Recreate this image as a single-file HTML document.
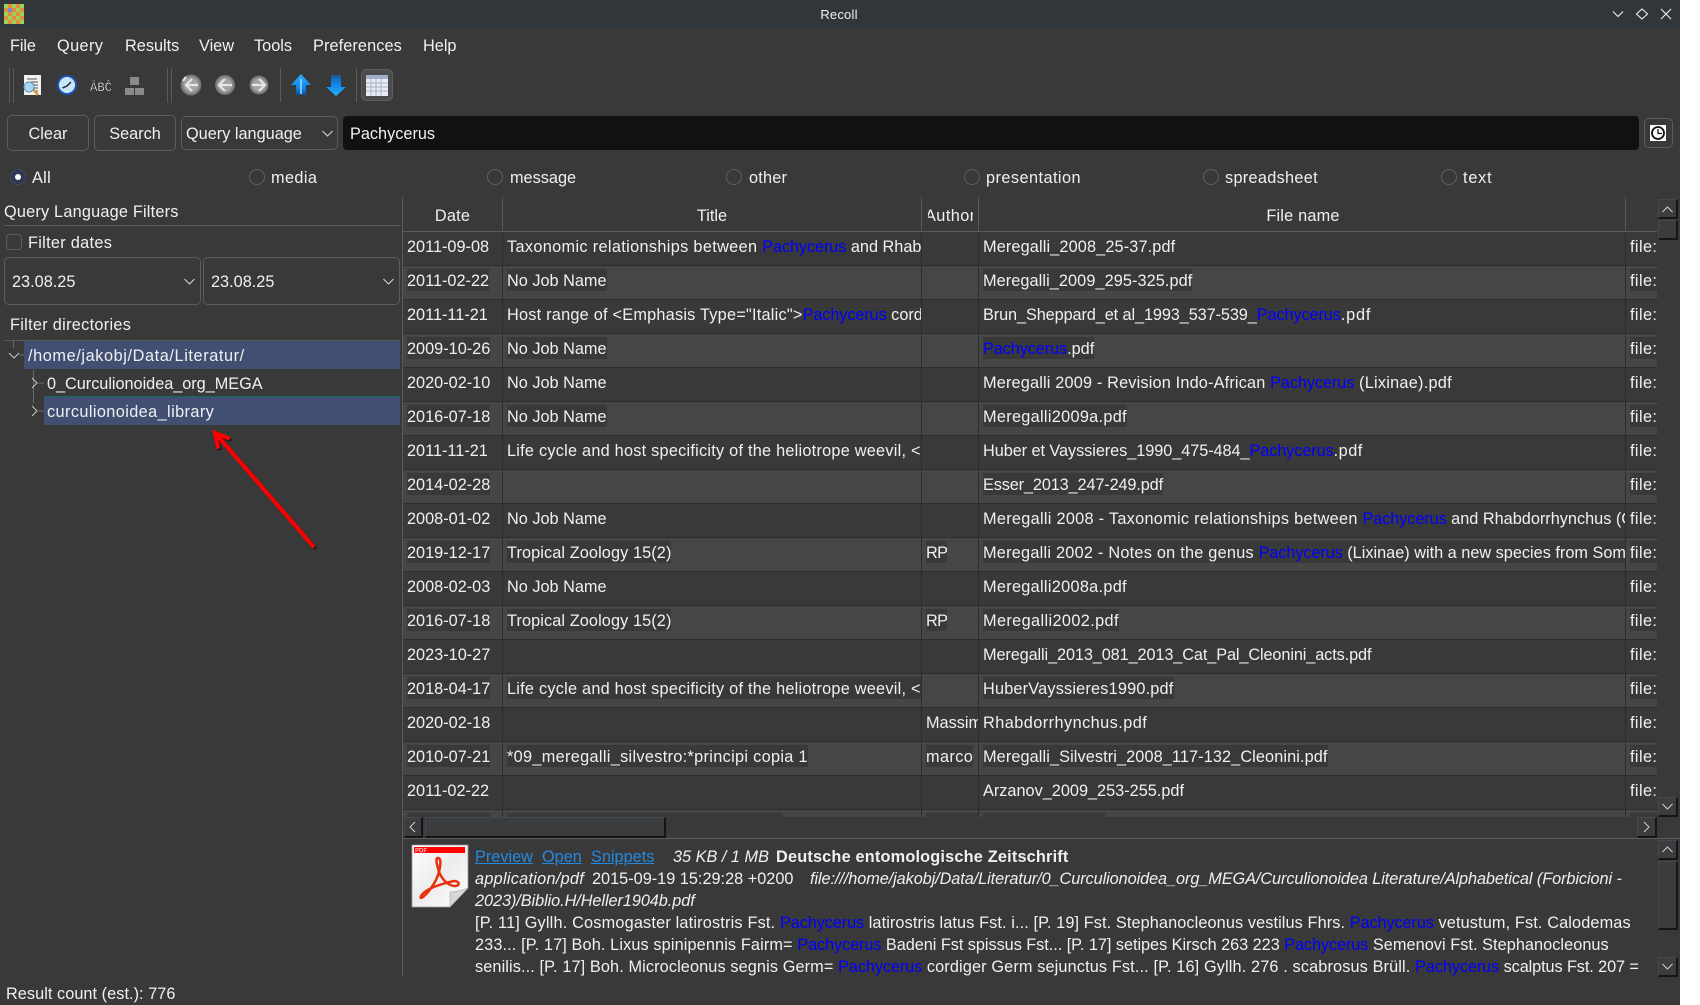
<!DOCTYPE html>
<html><head><meta charset="utf-8"><title>Recoll</title>
<style>
html,body{margin:0;padding:0;background:#fff}
#w{position:relative;width:1680px;height:1005px;background:#393939;overflow:hidden;font-family:"Liberation Sans",sans-serif;font-size:16.3px;color:#eff0f1;line-height:22px}
#page{position:relative;width:1700px;height:1005px;background:#fff;overflow:hidden}
.a{position:absolute;white-space:nowrap;transform:translateY(1px)}
.l{position:absolute}
.b{position:absolute;box-sizing:border-box;border:1px solid #5c5c5c;border-radius:5px;text-align:center}
.rb{position:absolute;width:16px;height:16px;box-sizing:border-box;border:1px solid #5e5e5e;border-radius:50%;top:169px}
.r{position:absolute;left:403px;width:1254px;height:34px;box-sizing:border-box;border-top:1px solid #2b2e31}
.r.p{background:#464646}
.c{position:absolute;top:3px;height:22px;overflow:hidden;white-space:nowrap}
.c span.x{display:inline-block;height:22px;line-height:24px;vertical-align:top}
.r.p .c span.x{background:#393939}
.d{left:4px;width:95px}
.ti{left:104px;width:414px}
.au{left:523px;width:52px}
.f{left:580px;width:642px}
.u{left:1227px;width:27px;letter-spacing:.4px}
i.h{font-style:normal;color:#0000ff;letter-spacing:-.1px}
.sb{position:absolute;box-sizing:border-box;border-style:solid;border-width:1px 2px 2px 1px;border-color:#43494e #141516 #141516 #43494e;background:#3a3c3e}
a{color:#2489e0;text-decoration:underline;position:absolute;white-space:nowrap;transform:translateY(1px)}
.pl{position:absolute;left:475px;white-space:nowrap;transform:translateY(1px)}
svg{position:absolute;overflow:visible}
</style></head><body><div id="page"><div id="w">

<!-- title bar -->
<div class="l" style="left:0;top:0;width:1680px;height:28px;background:#31363b"></div>
<svg style="left:4px;top:4px" width="20" height="20" viewBox="0 0 5 5" shape-rendering="crispEdges">
<rect width="5" height="5" fill="#97d35c"/>
<rect x="1" y="0" width="1" height="1" fill="#e88a3c"/><rect x="3" y="0" width="1" height="1" fill="#e88a3c"/>
<rect x="0" y="1" width="1" height="1" fill="#e88a3c"/><rect x="1" y="1" width="1" height="1" fill="#6f8fd8"/><rect x="2" y="1" width="1" height="1" fill="#e88a3c"/><rect x="4" y="1" width="1" height="1" fill="#e88a3c"/>
<rect x="1" y="2" width="1" height="1" fill="#e88a3c"/><rect x="3" y="2" width="1" height="1" fill="#e88a3c"/>
<rect x="0" y="3" width="1" height="1" fill="#e88a3c"/><rect x="2" y="3" width="1" height="1" fill="#e88a3c"/><rect x="4" y="3" width="1" height="1" fill="#e88a3c"/>
<rect x="1" y="4" width="1" height="1" fill="#e88a3c"/><rect x="3" y="4" width="1" height="1" fill="#e88a3c"/>
</svg>
<div class="a" style="left:739px;width:200px;text-align:center;top:3px;font-size:13px;letter-spacing:.2px">Recoll</div>
<svg style="left:1612px;top:8px" width="64" height="12" fill="none" stroke="#eff0f1" stroke-width="1.1">
<path d="M1 3.5L6 8.5L11 3.5"/><path d="M30 1L35.5 6L30 11L24.500 6Z"/><path d="M49 1L59 11M59 1L49 11"/>
</svg>

<!-- menu -->
<div class="a" style="left:10px;top:34px;letter-spacing:-.1px">File</div>
<div class="a" style="left:57px;top:34px;letter-spacing:.4px">Query</div>
<div class="a" style="left:125px;top:34px">Results</div>
<div class="a" style="left:199px;top:34px">View</div>
<div class="a" style="left:254px;top:34px">Tools</div>
<div class="a" style="left:313px;top:34px;letter-spacing:.1px">Preferences</div>
<div class="a" style="left:423px;top:34px">Help</div>

<!-- toolbar -->
<svg style="left:0;top:62px" width="400" height="46">
<g fill="#5a5a5a">
<rect x="9" y="6" width="1" height="35"/><rect x="13" y="6" width="1" height="35"/>
<rect x="167" y="6" width="1" height="35"/><rect x="171" y="6" width="1" height="35"/>
<rect x="280" y="6" width="1" height="34"/><rect x="356" y="6" width="1" height="34"/>
</g>
<!-- doc search -->
<rect x="24" y="13" width="17" height="20" fill="#f2f2f0"/>
<path d="M27 17h10M31 20h7M29 23h9M33 26h5M33 29h5" stroke="#555" stroke-width="1"/>
<path d="M33 27l5 6" stroke="#d89a40" stroke-width="2.500"/>
<circle cx="29" cy="25" r="5" fill="#a8d8f4" stroke="#6a90b0"/>
<!-- clock -->
<circle cx="67" cy="23" r="10" fill="#1f4fb8"/><circle cx="67" cy="23" r="8" fill="#c6e6fa"/>
<path d="M67 24L71 20M67 24L62.500 26" stroke="#222" stroke-width="1.500"/>
<path d="M67 15.500v1.500M67 29v1.500M59.500 23h1.500M73 23h1.500" stroke="#fff"/>
<!-- ABC -->
<text x="90" y="29" font-family="Liberation Mono,monospace" font-size="13" fill="#fff" stroke="#000" stroke-width=".3" textLength="22" lengthAdjust="spacingAndGlyphs">ÂBĈ</text>
<!-- blocks -->
<rect x="130" y="15" width="9" height="8" fill="#8a8a8a"/><rect x="125" y="26" width="9" height="7" fill="#8a8a8a"/><rect x="135" y="26" width="9" height="7" fill="#8a8a8a"/>
<!-- nav -->
<defs><radialGradient id="g" cx=".5" cy=".5" r=".5"><stop offset=".6" stop-color="#a4a4a4"/><stop offset="1" stop-color="#6a6a6a"/></radialGradient>
<linearGradient id="bu" x1="0" y1="0" x2="0" y2="1"><stop offset="0" stop-color="#2fb0ff"/><stop offset=".7" stop-color="#0d82e6"/><stop offset="1" stop-color="#0a4f90"/></linearGradient>
<linearGradient id="bd" x1="0" y1="1" x2="0" y2="0"><stop offset="0" stop-color="#2fb0ff"/><stop offset=".6" stop-color="#0d82e6"/><stop offset="1" stop-color="#1a5a90"/></linearGradient></defs>
<circle cx="191" cy="23" r="10.500" fill="url(#g)"/><path d="M198 23H186M192 17L186 23L192 29M186 15L183 19" stroke="#e6e6e6" stroke-width="2.200" fill="none"/>
<circle cx="225" cy="23" r="10" fill="url(#g)"/><path d="M232 23H219M225 17L219 23L225 29" stroke="#e6e6e6" stroke-width="2.200" fill="none"/>
<circle cx="259" cy="23" r="9.500" fill="url(#g)"/><path d="M252 23H265M259 17L265 23L259 29" stroke="#e6e6e6" stroke-width="2.200" fill="none"/>
<path d="M301 12L311 23H306V33H296V23H291Z" fill="url(#bu)"/><path d="M301 17V32" stroke="#a5dcff" stroke-width="1.500"/>
<path d="M331 13H341V25H346L336 34L326 25H331Z" fill="url(#bd)"/>
<rect x="361.500" y="7.500" width="31" height="31" rx="5" fill="#4b4b4b" stroke="#5f5f5f"/>
<rect x="366" y="13" width="22" height="21" fill="#e8edf5"/><rect x="366" y="13" width="22" height="4" fill="#9fb0c8"/>
<path d="M366 21h22M366 25h22M366 29h22M371 17v17M376 17v17M381 17v17" stroke="#a9b4c4" stroke-width="1"/>
</svg>

<!-- query row -->
<div class="b" style="left:7px;top:115px;width:82px;height:36px;line-height:36px">Clear</div>
<div class="b" style="left:94px;top:115px;width:82px;height:36px;line-height:36px">Search</div>
<div class="b" style="left:181px;top:116px;width:157px;height:34px;line-height:34px;text-align:left;padding-left:4px">Query language</div>
<svg style="left:322px;top:130px" width="11" height="7" fill="none" stroke="#d8d8d8"><path d="M.5 1L5.500 6L10.500 1"/></svg>
<div class="l" style="left:343px;top:116px;width:1296px;height:34px;background:#111;border-radius:4px"></div>
<div class="a" style="left:350px;top:122px">Pachycerus</div>
<div class="b" style="left:1644px;top:118px;width:29px;height:30px"></div>
<svg style="left:1650px;top:125px" width="16" height="16"><rect width="16" height="16" fill="#fff"/><circle cx="8" cy="8" r="6" fill="none" stroke="#111" stroke-width="1.800"/><path d="M8 4V8.500H12" fill="none" stroke="#111" stroke-width="1.300"/></svg>

<!-- radios -->
<div class="rb" style="left:10px;background:#2f3a50;border-color:#3d4a66"></div><div class="l" style="left:15px;top:174px;width:6px;height:6px;border-radius:50%;background:#fff"></div>
<div class="a" style="left:32px;top:166px;letter-spacing:.3px">All</div>
<div class="rb" style="left:249px"></div><div class="a" style="left:271px;top:166px;letter-spacing:.4px">media</div>
<div class="rb" style="left:487px"></div><div class="a" style="left:510px;top:166px">message</div>
<div class="rb" style="left:726px"></div><div class="a" style="left:749px;top:166px;letter-spacing:.2px">other</div>
<div class="rb" style="left:964px"></div><div class="a" style="left:986px;top:166px;letter-spacing:.45px">presentation</div>
<div class="rb" style="left:1203px"></div><div class="a" style="left:1225px;top:166px;letter-spacing:.3px">spreadsheet</div>
<div class="rb" style="left:1441px"></div><div class="a" style="left:1463px;top:166px;letter-spacing:.8px">text</div>

<!-- left panel -->
<div class="a" style="left:4px;top:200px;letter-spacing:.2px">Query Language Filters</div>
<div class="l" style="left:4px;top:225px;width:396px;height:1px;background:#5a5a5a"></div>
<div class="l" style="left:6px;top:234px;width:16px;height:16px;box-sizing:border-box;border:1px solid #5e5e5e;border-radius:4px"></div>
<div class="a" style="left:28px;top:231px;letter-spacing:.3px">Filter dates</div>
<div class="b" style="left:4px;top:257px;width:197px;height:48px;line-height:48px;text-align:left;padding-left:7px">23.08.25</div>
<div class="b" style="left:203px;top:257px;width:197px;height:48px;line-height:48px;text-align:left;padding-left:7px">23.08.25</div>
<svg style="left:184px;top:278px" width="205" height="7" fill="none" stroke="#d8d8d8"><path d="M.5 1L5.500 6L10.500 1M199.500 1L204.500 6L209.500 1"/></svg>
<div class="a" style="left:10px;top:313px;letter-spacing:.3px">Filter directories</div>
<div class="l" style="left:4px;top:340px;width:396px;height:1px;background:#5a5a5a"></div>
<div class="l" style="left:24px;top:341px;width:376px;height:28px;background:#434f72"></div>
<div class="l" style="left:44px;top:396px;width:356px;height:29px;background:#434f72;border-top:1px solid #14695c;box-sizing:border-box"></div>
<svg style="left:0;top:340px" width="50" height="85" fill="none" stroke="#6a6a6a">
<path d="M13.500 1V8M19 15H24M33.500 30V63M38 43H44M38 71H44"/>
<path d="M9 13L14 18L19 13M32 38L37 43L32 48M32 66L37 71L32 76" stroke="#c8c8c8"/>
</svg>
<div class="a" style="left:28px;top:344px;letter-spacing:.6px">/home/jakobj/Data/Literatur/</div>
<div class="a" style="left:47px;top:372px;letter-spacing:-.03px">0_Curculionoidea_org_MEGA</div>
<div class="a" style="left:47px;top:400px;letter-spacing:.4px">curculionoidea_library</div>

<!-- arrow -->
<svg style="left:0;top:0" width="400" height="600" fill="none" stroke-linecap="round">
<g stroke="#1a1a1a" stroke-width="4" transform="translate(1.500 1.500)"><path d="M313 546L216 434M228 438L215 433L218 447"/></g>
<g stroke="#f00" stroke-width="4"><path d="M313 546L216 434M228 438L215 433L218 447"/></g>
</svg>

<div class="a" style="left:6px;top:982px;letter-spacing:.05px">Result count (est.): 776</div>

<!-- table -->
<div class="l" style="left:402px;top:197px;width:1px;height:780px;background:#5a5a5a"></div>
<div class="a" style="left:403px;width:99px;text-align:center;top:204px;letter-spacing:.2px">Date</div>
<div class="a" style="left:503px;width:418px;text-align:center;top:204px">Title</div>
<div class="a" style="left:928px;width:45px;top:204px;overflow:hidden"><div style="margin-left:-3px;white-space:nowrap;letter-spacing:.45px">Author</div></div>
<div class="a" style="left:980px;width:646px;text-align:center;top:204px;letter-spacing:.2px">File name</div>

<div class="r" style="top:231px;border-top-color:#5a5a5a"><div class="c d"><span class="x">2011-09-08</span></div><div class="c ti"><span class="x"><span style="letter-spacing:.34px">Taxonomic relationships between </span><i class="h">Pachycerus</i> and Rhabdorrhynchus</span></div><div class="c f"><span class="x" style="letter-spacing:.13px">Meregalli_2008_25-37.pdf</span></div><div class="c u"><span class="x">file:</span></div></div>
<div class="r p" style="top:265px"><div class="c d"><span class="x">2011-02-22</span></div><div class="c ti"><span class="x">No Job Name</span></div><div class="c f"><span class="x" style="letter-spacing:.08px">Meregalli_2009_295-325.pdf</span></div><div class="c u"><span class="x">file:</span></div></div>
<div class="r" style="top:299px"><div class="c d"><span class="x">2011-11-21</span></div><div class="c ti"><span class="x"><span style="letter-spacing:.23px">Host range of &lt;Emphasis Type="Italic"&gt;</span><i class="h">Pachycerus</i> cordiger</span></div><div class="c f"><span class="x"><span style="letter-spacing:-.1px">Brun_Sheppard_et al_1993_537-539_</span><i class="h">Pachycerus</i><span style="letter-spacing:.8px">.pdf</span></span></div><div class="c u"><span class="x">file:</span></div></div>
<div class="r p" style="top:333px"><div class="c d"><span class="x">2009-10-26</span></div><div class="c ti"><span class="x">No Job Name</span></div><div class="c f"><span class="x"><i class="h">Pachycerus</i>.pdf</span></div><div class="c u"><span class="x">file:</span></div></div>
<div class="r" style="top:367px"><div class="c d"><span class="x">2020-02-10</span></div><div class="c ti"><span class="x">No Job Name</span></div><div class="c f"><span class="x"><span style="letter-spacing:.17px">Meregalli 2009 - Revision Indo-African </span><i class="h">Pachycerus</i><span style="letter-spacing:.25px"> (Lixinae).pdf</span></span></div><div class="c u"><span class="x">file:</span></div></div>
<div class="r p" style="top:401px"><div class="c d"><span class="x">2016-07-18</span></div><div class="c ti"><span class="x">No Job Name</span></div><div class="c f"><span class="x" style="letter-spacing:.3px">Meregalli2009a.pdf</span></div><div class="c u"><span class="x">file:</span></div></div>
<div class="r" style="top:435px"><div class="c d"><span class="x">2011-11-21</span></div><div class="c ti"><span class="x" style="letter-spacing:.24px">Life cycle and host specificity of the heliotrope weevil, &lt;</span></div><div class="c f"><span class="x"><span style="letter-spacing:-.06px">Huber et Vayssieres_1990_475-484_</span><i class="h">Pachycerus</i><span style="letter-spacing:.5px">.pdf</span></span></div><div class="c u"><span class="x">file:</span></div></div>
<div class="r p" style="top:469px"><div class="c d"><span class="x">2014-02-28</span></div><div class="c f"><span class="x" style="letter-spacing:-.13px">Esser_2013_247-249.pdf</span></div><div class="c u"><span class="x">file:</span></div></div>
<div class="r" style="top:503px"><div class="c d"><span class="x">2008-01-02</span></div><div class="c ti"><span class="x">No Job Name</span></div><div class="c f"><span class="x"><span style="letter-spacing:.29px">Meregalli 2008 - Taxonomic relationships between </span><i class="h">Pachycerus</i> and Rhabdorrhynchus (Coleoptera)</span></div><div class="c u"><span class="x">file:</span></div></div>
<div class="r p" style="top:537px"><div class="c d"><span class="x">2019-12-17</span></div><div class="c ti"><span class="x" style="letter-spacing:.1px">Tropical Zoology 15(2)</span></div><div class="c au"><span class="x" style="letter-spacing:-.6px">RP</span></div><div class="c f"><span class="x"><span style="letter-spacing:.24px">Meregalli 2002 - Notes on the genus </span><i class="h">Pachycerus</i> (Lixinae) with a new species from Somalia.pdf</span></div><div class="c u"><span class="x">file:</span></div></div>
<div class="r" style="top:571px"><div class="c d"><span class="x">2008-02-03</span></div><div class="c ti"><span class="x">No Job Name</span></div><div class="c f"><span class="x" style="letter-spacing:.3px">Meregalli2008a.pdf</span></div><div class="c u"><span class="x">file:</span></div></div>
<div class="r p" style="top:605px"><div class="c d"><span class="x">2016-07-18</span></div><div class="c ti"><span class="x" style="letter-spacing:.1px">Tropical Zoology 15(2)</span></div><div class="c au"><span class="x" style="letter-spacing:-.6px">RP</span></div><div class="c f"><span class="x" style="letter-spacing:.38px">Meregalli2002.pdf</span></div><div class="c u"><span class="x">file:</span></div></div>
<div class="r" style="top:639px"><div class="c d"><span class="x">2023-10-27</span></div><div class="c f"><span class="x" style="letter-spacing:-.11px">Meregalli_2013_081_2013_Cat_Pal_Cleonini_acts.pdf</span></div><div class="c u"><span class="x">file:</span></div></div>
<div class="r p" style="top:673px"><div class="c d"><span class="x">2018-04-17</span></div><div class="c ti"><span class="x" style="letter-spacing:.24px">Life cycle and host specificity of the heliotrope weevil, &lt;</span></div><div class="c f"><span class="x" style="letter-spacing:.19px">HuberVayssieres1990.pdf</span></div><div class="c u"><span class="x">file:</span></div></div>
<div class="r" style="top:707px"><div class="c d"><span class="x">2020-02-18</span></div><div class="c au"><span class="x">Massimo</span></div><div class="c f"><span class="x" style="letter-spacing:.45px">Rhabdorrhynchus.pdf</span></div><div class="c u"><span class="x">file:</span></div></div>
<div class="r p" style="top:741px"><div class="c d"><span class="x">2010-07-21</span></div><div class="c ti"><span class="x" style="letter-spacing:.32px">*09_meregalli_silvestro:*principi copia 1</span></div><div class="c au"><span class="x" style="letter-spacing:.4px">marco</span></div><div class="c f"><span class="x" style="letter-spacing:.1px">Meregalli_Silvestri_2008_117-132_Cleonini.pdf</span></div><div class="c u"><span class="x">file:</span></div></div>
<div class="r" style="top:775px"><div class="c d"><span class="x">2011-02-22</span></div><div class="c f"><span class="x">Arzanov_2009_253-255.pdf</span></div><div class="c u"><span class="x">file:</span></div></div>
<div class="r p" style="top:809px;height:8px"></div>
<div class="l" style="left:407px;top:813px;width:84px;height:4px;background:#393939"></div>
<div class="l" style="left:507px;top:813px;width:276px;height:4px;background:#393939"></div>
<div class="l" style="left:926px;top:813px;width:52px;height:4px;background:#393939"></div>
<div class="l" style="left:983px;top:813px;width:122px;height:4px;background:#393939"></div>
<div class="l" style="left:1630px;top:813px;width:27px;height:4px;background:#393939"></div>

<!-- column separators -->
<div class="l" style="left:502px;top:197px;width:1px;height:34px;background:#5a5a5a"></div>
<div class="l" style="left:921px;top:197px;width:1px;height:34px;background:#5a5a5a"></div>
<div class="l" style="left:978px;top:197px;width:1px;height:34px;background:#5a5a5a"></div>
<div class="l" style="left:1625px;top:197px;width:1px;height:34px;background:#5a5a5a"></div>
<div class="l" style="left:502px;top:232px;width:1px;height:585px;background:#2b2e31"></div>
<div class="l" style="left:921px;top:232px;width:1px;height:585px;background:#2b2e31"></div>
<div class="l" style="left:978px;top:232px;width:1px;height:585px;background:#2b2e31"></div>
<div class="l" style="left:1625px;top:232px;width:1px;height:585px;background:#2b2e31"></div>

<!-- table scrollbars -->
<div class="l" style="left:1657px;top:197px;width:23px;height:620px;background:#393939"></div>
<div class="sb" style="left:1658px;top:199px;width:20px;height:20px"></div>
<div class="sb" style="left:1658px;top:220px;width:20px;height:20px"></div>
<div class="sb" style="left:1658px;top:797px;width:20px;height:20px"></div>
<div class="l" style="left:403px;top:817px;width:1277px;height:21px;background:#393939"></div>
<div class="sb" style="left:404px;top:817px;width:19px;height:21px"></div>
<div class="sb" style="left:425px;top:817px;width:241px;height:21px"></div>
<div class="sb" style="left:1637px;top:817px;width:20px;height:21px"></div>
<div class="l" style="left:402px;top:838px;width:1278px;height:1px;background:#5f5f5f"></div>
<div class="sb" style="left:1658px;top:840px;width:20px;height:20px"></div>
<div class="sb" style="left:1658px;top:861px;width:20px;height:69px"></div>
<div class="sb" style="left:1658px;top:957px;width:20px;height:20px"></div>
<svg style="left:0;top:0" width="1680" height="1005" fill="none" stroke="#d0d0d0">
<path d="M1662.500 212L1667.500 207L1672.500 212M1662.500 804L1667.500 809L1672.500 804M1662.500 852L1667.500 847L1672.500 852M1662.500 964L1667.500 969L1672.500 964M415 822L410 827L415 832M1644 822L1649 827L1644 832"/>
</svg>

<!-- pdf icon -->
<svg style="left:412px;top:845px" width="56" height="62" viewBox="0 0 56 62">
<defs><linearGradient id="pg" x1="0" y1="0" x2="1" y2="1"><stop offset="0" stop-color="#fff"/><stop offset=".5" stop-color="#ececec"/><stop offset="1" stop-color="#fff"/></linearGradient></defs>
<path d="M0 0H56V43L38 62H0Z" fill="url(#pg)" stroke="#999" stroke-width=".8"/>
<rect x="2" y="2" width="51" height="6" fill="#f00"/>
<text x="3" y="7.500" font-size="6" font-family="Liberation Sans,sans-serif" font-weight="bold" fill="#fbb">PDF</text>
<path d="M38 62V47Q45 47 56 43Z" fill="#d8d8d8" stroke="#aaa" stroke-width=".6"/>
<path d="M26 13C29 13 29 18 27 27C24 38 16 48 11 52C7 55 8 50 14 46C20 42 32 38 42 36C48 36 48 41 43 41C36 41 30 34 27 27C25 20 23 13 26 13Z" fill="none" stroke="#e8300c" stroke-width="2.500"/>
</svg>

<!-- preview text -->
<a style="left:475px;top:845px">Preview</a>
<a style="left:542px;top:845px">Open</a>
<a style="left:591px;top:845px">Snippets</a>
<div class="a" style="left:673px;top:845px;font-style:italic">35 KB / 1 MB</div>
<div class="a" style="left:776px;top:845px;font-weight:bold;letter-spacing:.19px">Deutsche entomologische Zeitschrift</div>
<div class="pl" style="top:867px;letter-spacing:.27px"><em>application/pdf</em></div>
<div class="a" style="left:592px;top:867px">2015-09-19 15:29:28 +0200</div>
<div class="a" style="left:810px;top:867px;font-style:italic;letter-spacing:-.08px">file:///home/jakobj/Data/Literatur/0_Curculionoidea_org_MEGA/Curculionoidea Literature/Alphabetical (Forbicioni -</div>
<div class="pl" style="top:889px;font-style:italic;letter-spacing:-.07px">2023)/Biblio.H/Heller1904b.pdf</div>
<div class="pl" style="top:911px"><span style="letter-spacing:.18px">[P. 11] Gyllh. Cosmogaster latirostris Fst. </span><i class="h">Pachycerus</i><span style="letter-spacing:.1px"> latirostris latus Fst. i... [P. 19] Fst. Stephanocleonus vestilus Fhrs. </span><i class="h">Pachycerus</i><span style="letter-spacing:.13px"> vetustum, Fst. Calodemas</span></div>
<div class="pl" style="top:933px"><span style="letter-spacing:.12px">233... [P. 17] Boh. Lixus spinipennis Fairm= </span><i class="h">Pachycerus</i><span style="letter-spacing:-.04px"> Badeni Fst spissus Fst... [P. 17] setipes Kirsch 263 223 </span><i class="h">Pachycerus</i><span style="letter-spacing:.05px"> Semenovi Fst. Stephanocleonus</span></div>
<div class="pl" style="top:955px"><span style="letter-spacing:.11px">senilis... [P. 17] Boh. Microcleonus segnis Germ= </span><i class="h">Pachycerus</i><span style="letter-spacing:.13px"> cordiger Germ sejunctus Fst... [P. 16] Gyllh. 276 . scabrosus Brüll. </span><i class="h">Pachycerus</i><span style="letter-spacing:-.1px"> scalptus Fst. 207 =</span></div>

</div></div></body></html>
